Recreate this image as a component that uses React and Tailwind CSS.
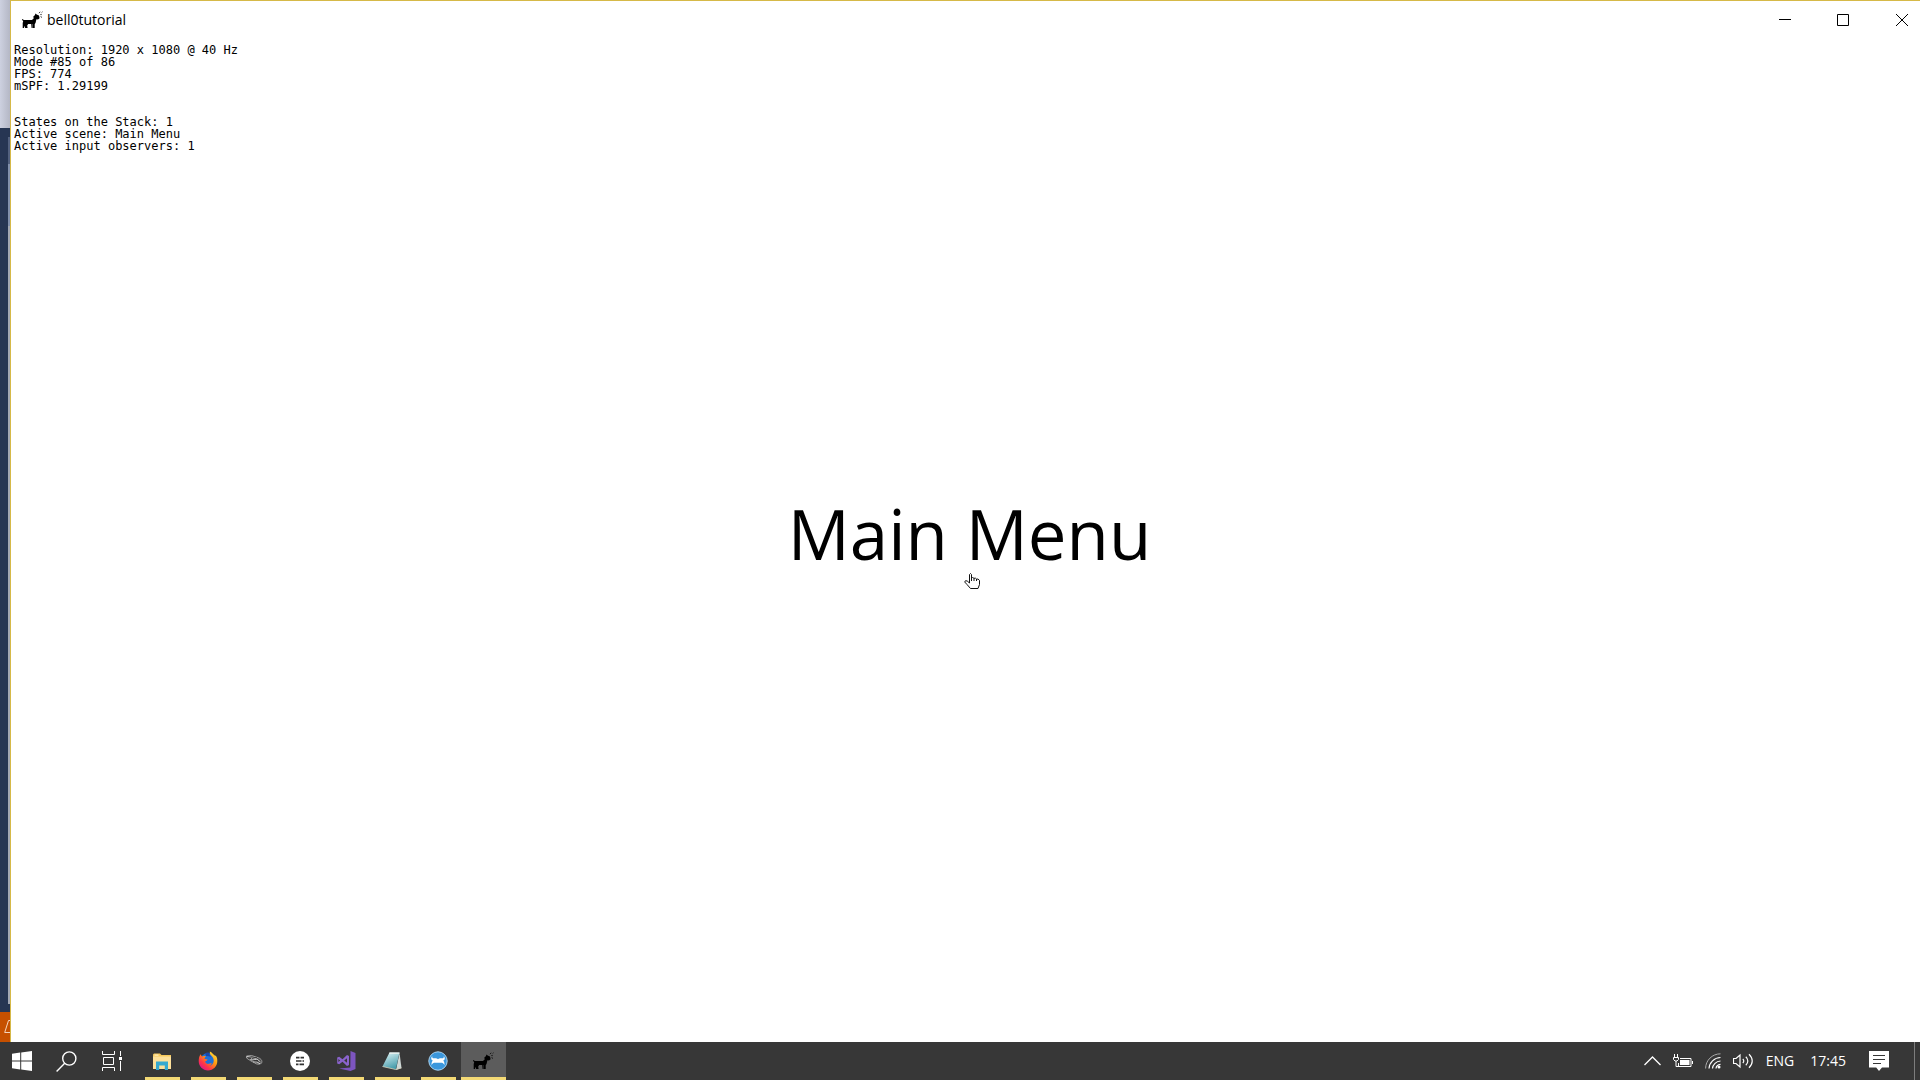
import React from "react";

const GoatIcon = () => (
  <svg width="22" height="18" viewBox="0 0 22 18" fill="#000" aria-hidden="true">
    <path d="M0 8l2 1h8l2-2-1-1 2-2 .4-1.600 1.300 1.200 2.300.8.600 2.800-1.600 1.200-1.600-.2-.8 3.500-.9 1.500v3.800h-2.400v-4h-.5v4H9.400l-.4-4H6.200l-1 1.500.4 2.500H3.200l-.8-2.300-.4 2.300H.7V12l.5-2L0 9z" />
    <path d="M17 2.200l1.200-1.400M18.300 3.600h1.400M18.600 5.600l1.400.8M19.600 1.600l.9-.8" stroke="#000" strokeWidth=".8" />
  </svg>
);

const WindowsIcon = () => (
  <svg width="20" height="20" viewBox="0 0 20 20" fill="#fff" aria-hidden="true">
    <path d="M0 2.8L8.2 1.6v7.9H0zM9.2 1.4L20 0v9.5H9.2zM0 10.5h8.2v7.9L0 17.2zM9.2 10.5H20V20L9.2 18.6z" />
  </svg>
);

const SearchIcon = () => (
  <svg width="21" height="21" viewBox="0 0 21 21" fill="none" stroke="#fff" strokeWidth="1.4" aria-hidden="true">
    <circle cx="13.3" cy="7.5" r="6.6" />
    <path d="M8.7 12.2L.6 20.4" />
  </svg>
);

const TaskViewIcon = () => (
  <svg width="20" height="20" viewBox="0 0 20 20" fill="none" stroke="#fff" aria-hidden="true">
    <path d="M.5 0v3.500h12V0M.5 20v-3.500h12V20M1.500 6.500h10v7h-10zM18.500 0v5M18.500 10v10" />
    <path d="M17 6h3v3h-3z" fill="#fff" stroke="none" />
  </svg>
);

const FolderIcon = () => (
  <svg width="20" height="20" viewBox="0 0 20 20" aria-hidden="true">
    <path d="M1 3.500l1-1h6l1.500 1.500H19V17H1z" fill="#f7c95c" />
    <path d="M1 5.500h18V18H1z" fill="#fde09a" />
    <path d="M2.500 3.600h4v1h-4z" fill="#fff6d6" />
    <path d="M4 19v-8.500h12V19h-3.200v-4.500H7.200V19z" fill="#36a9cf" />
  </svg>
);

const FirefoxIcon = () => (
  <svg width="20" height="20" viewBox="0 0 20 20" aria-hidden="true">
    <defs>
      <linearGradient id="fox" x1="0.85" y1="0.05" x2="0.15" y2="0.9">
        <stop offset="0" stopColor="#ffdf3d" />
        <stop offset=".4" stopColor="#ff980e" />
        <stop offset=".75" stopColor="#ff3647" />
        <stop offset="1" stopColor="#e31587" />
      </linearGradient>
    </defs>
    <circle cx="10" cy="9.5" r="7.6" fill="#1f6fd6" />
    <path d="M2.6 3.2c.6 1.2 1 1.8 1.8 2.3 1-.5 2.200-.6 3.500-.3-1 .9-1.400 1.700-1.400 2.600 1 .3 2 .5 3 .7-.3 1.200-1.500 1.600-2.500 2.100.7 2 2.300 2.700 4.100 2.200 1-.3 1.900-.7 2.700-.2-.4 1.200-1.500 2-2.800 2.300 2.500-.2 4.800-2.400 4.700-5.400 0-2.600-1.700-4.600-3-5.600C11.900 3 11.700 1.600 11.900.4 13.900 1.400 15 3 16 3.700c.6.6 1 .9 1.300 1.500l.3-1C19 6 19.400 8 19.300 10c0 5.200-4 9.400-9.300 9.400-5.200 0-9.300-4.200-9.300-9.400 0-2.600.6-5 1.900-6.800z" fill="url(#fox)" />
    <path d="M7 2.200c1.500-.9 3-.9 4.500-.3-.3 1.500.4 2.500 1.700 3.800-2-.7-3.200-.1-5.100-.7z" fill="#1a47a8" />
  </svg>
);

const SketchIcon = () => (
  <svg width="20" height="20" viewBox="0 0 20 20" fill="none" aria-hidden="true">
    <path d="M2.500 5l5-.5 7 2.300c3 1.300 4 3.200 3 5.400-2 1.500-5 1.300-7-.4L7 10 2.500 7z" fill="#4a4a4a" stroke="#b0b0b0" strokeWidth=".8" />
    <path d="M3 5.500l5 1 5 1.500 3.500 3M7 9l5.500-.5M9 10.800l4 .2 3 1.800M8.500 6l-2 3" stroke="#ddd" strokeWidth=".9" />
    <path d="M4 7l9-.3M9.500 9.700l4.500.2" stroke="#222" strokeWidth=".8" />
  </svg>
);

const CircleBarsIcon = () => (
  <svg width="20" height="20" viewBox="0 0 20 20" aria-hidden="true">
    <circle cx="10" cy="10" r="10" fill="#fff" />
    <path d="M6 6.700h3.500M10.500 6.700H14M6 10h5.500M12.500 10H14M6 13.300h2.500M9.500 13.300H14" stroke="#333" strokeWidth="1.700" />
  </svg>
);

const StudioIcon = () => (
  <svg width="20" height="20" viewBox="0 0 20 20" aria-hidden="true">
    <path d="M14.500 0L19.500 2v16l-5 2L3 17.500l11.300-1z" fill="#7d55c0" />
    <path d="M1.200 6.500l2-.8L6.500 8.300 11 4l2 .9v9.200l-2 .9-4.500-4.300-3.300 2.600-2-.8z" fill="#8a63cc" />
    <path d="M2.400 8v3l1.700-1.500zM8.200 9.500l2.800 2.200V7.300z" fill="#373737" />
  </svg>
);

const NotepadIcon = () => (
  <svg width="20" height="20" viewBox="0 0 20 20" aria-hidden="true">
    <defs>
      <linearGradient id="note" x1="0.2" y1="0" x2="0.6" y2="1">
        <stop offset="0" stopColor="#d9f1f3" />
        <stop offset="1" stopColor="#3f98a8" />
      </linearGradient>
    </defs>
    <path d="M17.500 2L19.500 17l-5.500 2z" fill="#cfd8d6" />
    <path d="M7.500 1.500h10L13.800 18.500.5 15.500z" fill="url(#note)" />
    <path d="M7.500 1.500h10v1.200H7z" fill="#f2f4f1" />
    <path d="M.5 15.500l13.300 3 5.700-1.500" stroke="#d9d3bd" strokeWidth=".8" fill="none" />
  </svg>
);

const MustacheIcon = () => (
  <svg width="20" height="20" viewBox="0 0 20 20" aria-hidden="true">
    <circle cx="10" cy="10" r="9.200" fill="#3b97dc" stroke="#a9d4f2" strokeWidth="1" />
    <path d="M4.200 5c-.2 1.800.6 2.600 1.800 2.300C7.300 7 8.800 7 10 8.200 11.200 7 12.700 7 14 7.300c1.200.3 2-.5 1.800-2.300 1.600 1.800 1.200 4-.6 4.600.8.900 1.400 2.200 1.300 4.400-.9-1.700-2-2.300-3.500-2.300H7c-1.500 0-2.600.6-3.500 2.300-.1-2.200.5-3.500 1.300-4.400-1.800-.6-2.200-2.800-.6-4.600z" fill="#fff" />
  </svg>
);

const BatteryIcon = () => (
  <svg width="20" height="15" viewBox="0 0 20 15" fill="none" stroke="#fff" aria-hidden="true">
    <path d="M1.500 0v3M4.500 0v3M.5 3.500h5v2L4 7H2L.5 5.500zM3 7v5.500h3" />
    <path d="M7 4.500h11v8H5.500V9M19.500 7v3" />
    <path d="M7 6h9.500v5H7z" fill="#fff" stroke="none" />
  </svg>
);

const WifiIcon = () => (
  <svg width="16" height="16" viewBox="0 0 16 16" fill="none" stroke="#fff" aria-hidden="true">
    <path d="M.6 15.500C.6 7.300 7.300.8 15.500.8" stroke="#aaa" />
    <path d="M4 15.500C4.300 9.500 9.300 4.700 15.500 4.500M7.500 15.500c.3-4 3.800-7.300 8-7.500M11 15.500c.2-2.200 2.200-4 4.500-4.200" strokeWidth="1.200" />
    <circle cx="14" cy="14" r="1.500" fill="#fff" stroke="none" />
  </svg>
);

const SpeakerIcon = () => (
  <svg width="21" height="16" viewBox="0 0 21 16" fill="none" stroke="#fff" aria-hidden="true">
    <path d="M.5 5.500H3L7 2v12l-4-3.500H.5zM9.800 6c1.300 1.200 1.300 2.800 0 4M12.800 3.800c2.700 2.600 2.700 5.800 0 8.400M16 1.200c4.300 4 4.300 9.600 0 13.600" strokeWidth="1.200" />
  </svg>
);

const ActionIcon = () => (
  <svg width="20" height="20" viewBox="0 0 20 20" aria-hidden="true">
    <path d="M0 0h20v16.500h-7L10 20l-2.800-3.500H0z" fill="#fff" />
    <path d="M4 4.500h12M4 8.500h12M4 12.500h8" stroke="#373737" />
  </svg>
);

const HandCursor = () => (
  <svg className="absolute top-[76px] left-44" width="17" height="17" viewBox="0 0 17 17" aria-hidden="true">
    <path d="M5.500 10V1.500l1-1 1 1V5l1-.5 1.500.8 1.500-.1 1 .9 1.500-.1 1.500 1.400v4.100l-1.500 4H6.500L3 11.500.7 9l.8-1.300 1.700.3z" fill="#fff" stroke="#111" strokeWidth="1" />
    <path d="M7.500 4.500v3.500M10 5.500v2.500M12.500 6v2" stroke="#111" strokeWidth="1" />
  </svg>
);

const system = [
  ["Start", WindowsIcon],
  ["Search", SearchIcon],
  ["Task View", TaskViewIcon],
];

const apps = [
  ["File Explorer", FolderIcon],
  ["Firefox", FirefoxIcon],
  ["Sketch tool", SketchIcon],
  ["Messages", CircleBarsIcon],
  ["Visual Studio", StudioIcon],
  ["Notepad", NotepadIcon],
  ["Mustache", MustacheIcon],
];

function TitleBar() {
  const control = "flex w-[58px] items-center justify-center hover:bg-gray-200";
  return (
    <header className="flex h-[38px] items-stretch">
      <div className="flex flex-1 items-center gap-[3px] pl-[11px]">
        <GoatIcon />
        <span className="text-sm">bell0tutorial</span>
      </div>
      <button aria-label="Minimize" className={control}>
        <svg width="12" height="12" viewBox="0 0 12 12" stroke="#000"><path d="M0 5.500h12" /></svg>
      </button>
      <button aria-label="Maximize" className={control}>
        <svg width="12" height="12" viewBox="0 0 12 12" stroke="#000" fill="none"><path d="M.5.5h11v11H.5z" /></svg>
      </button>
      <button aria-label="Close" className="flex w-12 items-center justify-center pl-3 hover:bg-red-500">
        <svg width="12" height="12" viewBox="0 0 12 12" stroke="#000"><path d="M0 0l12 12M12 0L0 12" /></svg>
      </button>
    </header>
  );
}

function Background() {
  return (
    <aside className="flex w-[10px] shrink-0 flex-col" aria-hidden="true">
      <div className="h-32 bg-linear-to-r from-[#cdd1e0] to-[#b4b7c5]" />
      <div className="flex flex-1 justify-end bg-[#273653] pt-[9px] pb-2">
        <div className="flex w-[2px] flex-col">
          <div className="h-[27px] bg-[#53617f]" />
          <div className="h-[62px] bg-[#8290ac]" />
          <div className="flex-1 bg-[#a3a8b4]" />
        </div>
      </div>
      <div className="flex h-[30px] items-center justify-end bg-[#c65000]">
        <svg width="6" height="14" viewBox="0 0 6 14" fill="none" stroke="#f4d5bd">
          <path d="M6 .5H4.500L.7 12.500H6" />
        </svg>
      </div>
    </aside>
  );
}

function Taskbar() {
  return (
    <footer className="flex h-[38px] items-stretch bg-[#373737] text-sm text-white">
      <nav className="mr-1 flex" aria-label="System">
        {system.map(([name, Icon]) => (
          <button key={name} aria-label={name} className="flex w-[45px] items-center justify-center pr-[2px]">
            <Icon />
          </button>
        ))}
      </nav>
      <nav className="flex flex-1" aria-label="Applications">
        {apps.map(([name, Icon]) => (
          <button key={name} aria-label={name} className="flex w-[46px] flex-col items-center">
            <span className="flex flex-1 items-center pt-[3px]"><Icon /></span>
            <span className="h-[3px] w-[35px] bg-[#f3d975]" />
          </button>
        ))}
        <button aria-label="bell0tutorial" className="flex w-[45px] flex-col items-center bg-[#5c5c5c]">
          <span className="flex flex-1 items-center pt-[3px]"><GoatIcon /></span>
          <span className="h-[3px] w-full bg-[#f3d975]" />
        </button>
      </nav>
      <div className="flex items-center">
        <button aria-label="Show hidden icons" className="mr-3">
          <svg width="17" height="10" viewBox="0 0 17 10" fill="none" stroke="#fff" strokeWidth="1.300"><path d="M.5 9L8.500 1l8 8" /></svg>
        </button>
        <button aria-label="Battery" className="mr-3"><BatteryIcon /></button>
        <button aria-label="Network" className="mr-3"><WifiIcon /></button>
        <button aria-label="Volume" className="mr-3"><SpeakerIcon /></button>
        <button className="mr-4">ENG</button>
        <button className="mr-[23px]">17:45</button>
        <button aria-label="Notifications" className="mr-[25px]"><ActionIcon /></button>
        <button aria-label="Show desktop" className="h-full w-[6px] border-l border-[#7d7d7d]" />
      </div>
    </footer>
  );
}

export default function App() {
  return (
    <div className="flex min-h-screen flex-col bg-white font-['Open_Sans',sans-serif] text-black">
      <div className="flex flex-1">
        <Background />
        <section className="flex flex-1 flex-col border-t border-l border-[#d6b948] bg-white">
          <TitleBar />
          <main className="grid flex-1">
            <pre className="col-start-1 row-start-1 self-start pt-[5px] pl-[3px] font-['DejaVu_Sans_Mono',monospace] text-xs leading-3">
{`Resolution: 1920 x 1080 @ 40 Hz
Mode #85 of 86
FPS: 774
mSPF: 1.29199


States on the Stack: 1
Active scene: Main Menu
Active input observers: 1`}
            </pre>
            <h1 className="relative col-start-1 row-start-1 mb-4 ml-2 place-self-center text-[69px] leading-[72px]">
              <button>Main Menu</button>
              <HandCursor />
            </h1>
          </main>
        </section>
      </div>
      <Taskbar />
    </div>
  );
}
